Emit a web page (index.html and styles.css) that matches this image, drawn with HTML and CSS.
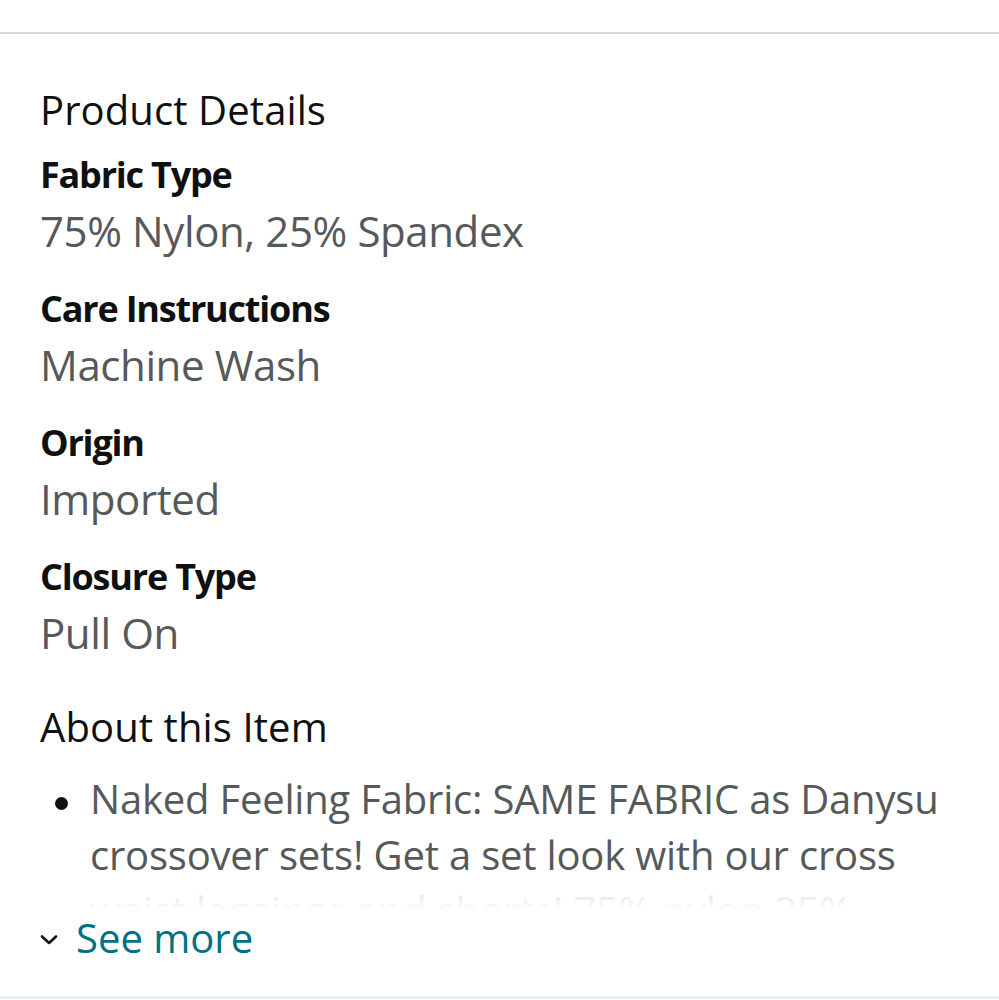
FILE: index.html
```html
<!DOCTYPE html>
<html lang="en">

<head>
    <meta charset="UTF-8">
    <meta name="viewport" content="width=device-width, initial-scale=1.0">
    <title>Product Details</title>
    <link rel="stylesheet" href="styles.css">
</head>

<body>
    <div class="rule"></div>

    <section class="details">
        <h2 class="section-title">Product Details</h2>
        <dl class="facts">
            <div class="fact">
                <dt>Fabric Type</dt>
                <dd>75% Nylon, 25% Spandex</dd>
            </div>
            <div class="fact">
                <dt>Care Instructions</dt>
                <dd>Machine Wash</dd>
            </div>
            <div class="fact">
                <dt>Origin</dt>
                <dd>Imported</dd>
            </div>
            <div class="fact">
                <dt>Closure Type</dt>
                <dd>Pull On</dd>
            </div>
        </dl>

        <h2 class="section-title about">About this Item</h2>
        <div class="about-box">
            <ul class="bullets">
                <li>Naked Feeling Fabric: SAME FABRIC as Danysu crossover sets! Get a set look with our cross waist leggings and shorts! 75% nylon 25% spandex, buttery soft and stretchy.</li>
            </ul>
            <div class="fade"></div>
        </div>

        <a class="see-more" href="#">
            <svg class="chevron" width="18" height="12" viewBox="0 0 18 12">
                <path d="M2 2.5 L9 9 L16 2.5" fill="none" stroke="#0f1111" stroke-width="2.6" stroke-linecap="round" stroke-linejoin="round" />
            </svg>
            <span>See more</span>
        </a>
    </section>

    <div class="rule rule-bottom"></div>
</body>

</html>
```
FILE: styles.css
```css
body {
    margin: 0;
    font-family: 'Open Sans', 'Noto Sans', sans-serif;
    color: #0f1111;
    background: #ffffff;
}

.rule {
    height: 2px;
    margin-top: 32px;
    background-color: #d5d9d9;
}

.rule-bottom {
    margin-top: 0;
    height: 3px;
    background-color: #eaeded;
}

.details {
    padding: 0 40px;
    height: 962px;
    display: flex;
    flex-direction: column;
}

.section-title {
    font-size: 40px;
    font-weight: 400;
    line-height: 56px;
    letter-spacing: 0.1px;
    margin: 48px 0 0;
}

.facts {
    margin: 9px 0 0;
}

.fact {
    margin-bottom: 22px;
}

.fact dt {
    font-size: 36px;
    font-weight: 700;
    line-height: 56px;
    letter-spacing: -1.2px;
}

.fact dd {
    margin: 0;
    font-size: 42px;
    line-height: 56px;
    letter-spacing: -0.4px;
    color: #565959;
}

.section-title.about {
    margin-top: 16px;
}

.about-box {
    position: relative;
    height: 139px;
    margin-top: 16px;
    overflow: hidden;
}

.bullets {
    list-style: none;
    margin: 0;
    padding: 0 0 0 50px;
}

.bullets li {
    position: relative;
    font-size: 40px;
    line-height: 56px;
    letter-spacing: -0.2px;
    color: #565959;
}

.bullets li::before {
    content: '';
    position: absolute;
    left: -35px;
    top: 26px;
    width: 13px;
    height: 13px;
    border-radius: 50%;
    background: #0f1111;
}

/* fade out the clipped text */
.fade {
    position: absolute;
    left: 0;
    right: 0;
    bottom: 0;
    height: 36px;
    background: linear-gradient(rgba(255, 255, 255, 0.5), rgba(255, 255, 255, 0.85) 55%, #ffffff);
}

.see-more {
    display: flex;
    align-items: center;
    gap: 18px;
    text-decoration: none;
    color: #007185;
    font-size: 40px;
    line-height: 56px;
}

.chevron {
    display: block;
    margin-top: 4px;
}
```
